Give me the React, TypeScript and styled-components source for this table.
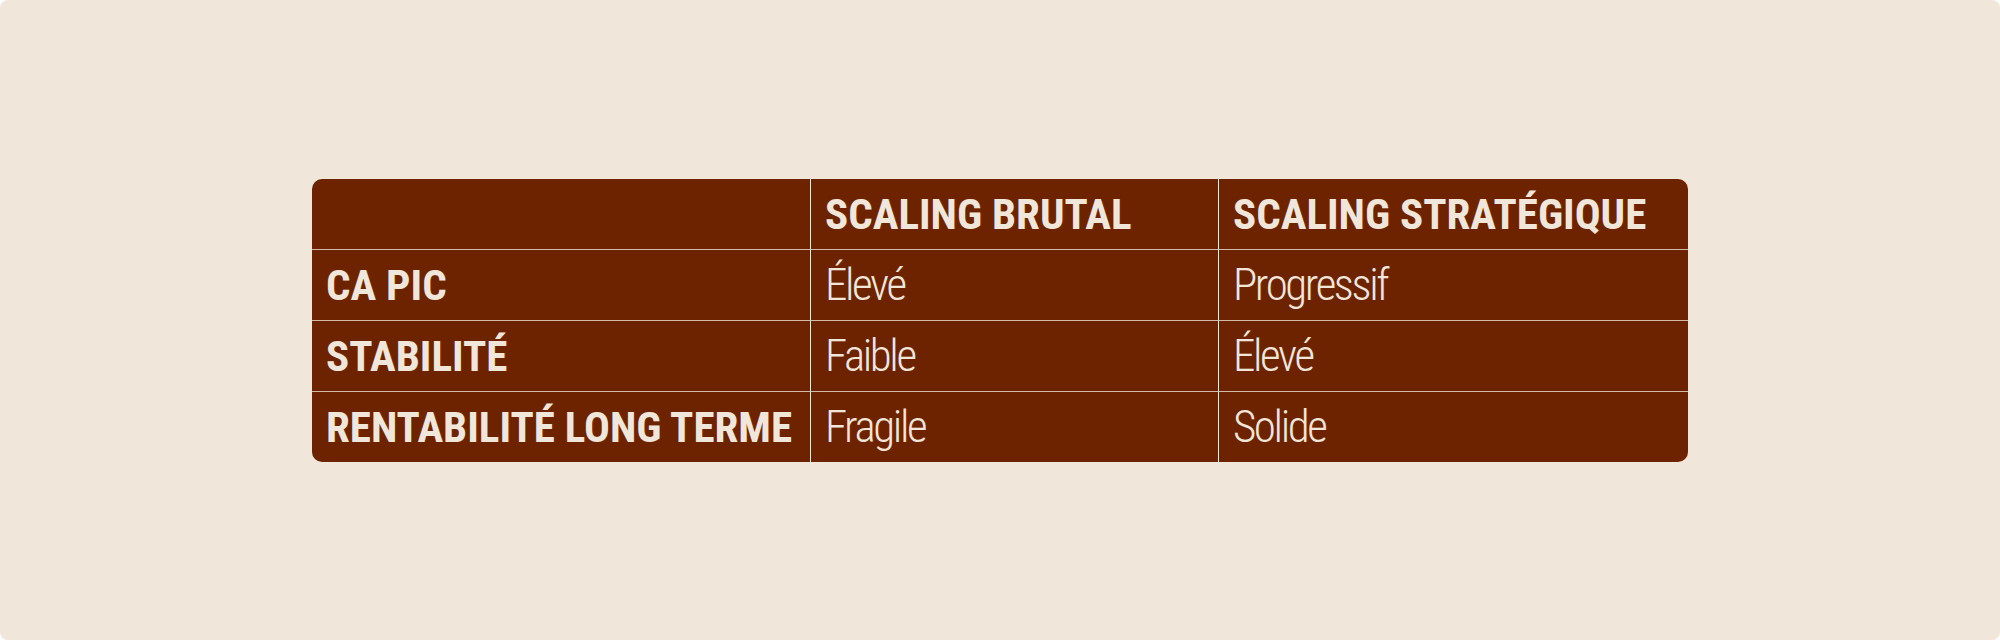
import React from "react";
import styled, { createGlobalStyle } from "styled-components";

const Global = createGlobalStyle`
  html, body { margin: 0; padding: 0; background: #ffffff; }
  body { font-family: "Roboto", "Liberation Sans", sans-serif; }
`;

const Page = styled.div`
  width: 2000px;
  height: 640px;
  box-sizing: border-box;
  background: #f0e6da;
  border-radius: 8px;
  display: flex;
  align-items: center;
  justify-content: center;
`;

const Table = styled.div`
  display: grid;
  grid-template-columns: 499px 408px 469px;
  border-radius: 10px;
  overflow: hidden;
  background: #6e2300;
`;

const Cell = styled.div<{ $lastCol?: boolean; $lastRow?: boolean; $head?: boolean }>`
  box-sizing: border-box;
  height: ${(p) => (p.$lastRow ? "70px" : "71px")};
  padding: 0 14px;
  display: flex;
  align-items: center;
  color: #f0e6da;
  border-right: ${(p) => (p.$lastCol ? "none" : "1px solid #f0e6da")};
  border-bottom: ${(p) => (p.$lastRow ? "none" : "1px solid rgba(240, 230, 218, 0.78)")};
  font-family: "Roboto", "Liberation Sans", sans-serif;
  font-stretch: 75%;
  font-size: ${(p) => (p.$head ? "43px" : "45px")};
  font-weight: ${(p) => (p.$head ? 700 : 300)};
  letter-spacing: ${(p) => (p.$head ? "0" : "-2.4px")};
  white-space: nowrap;
`;

const rows = [
  ["CA PIC", "Élevé", "Progressif"],
  ["STABILITÉ", "Faible", "Élevé"],
  ["RENTABILITÉ LONG TERME", "Fragile", "Solide"],
];

export default function App() {
  return (
    <>
      <Global />
      <Page>
        <Table>
          <Cell $head />
          <Cell $head>SCALING BRUTAL</Cell>
          <Cell $head $lastCol>SCALING STRATÉGIQUE</Cell>
          {rows.map((r, i) => (
            <React.Fragment key={i}>
              <Cell $head $lastRow={i === rows.length - 1}>{r[0]}</Cell>
              <Cell $lastRow={i === rows.length - 1}>{r[1]}</Cell>
              <Cell $lastCol $lastRow={i === rows.length - 1}>{r[2]}</Cell>
            </React.Fragment>
          ))}
        </Table>
      </Page>
    </>
  );
}
